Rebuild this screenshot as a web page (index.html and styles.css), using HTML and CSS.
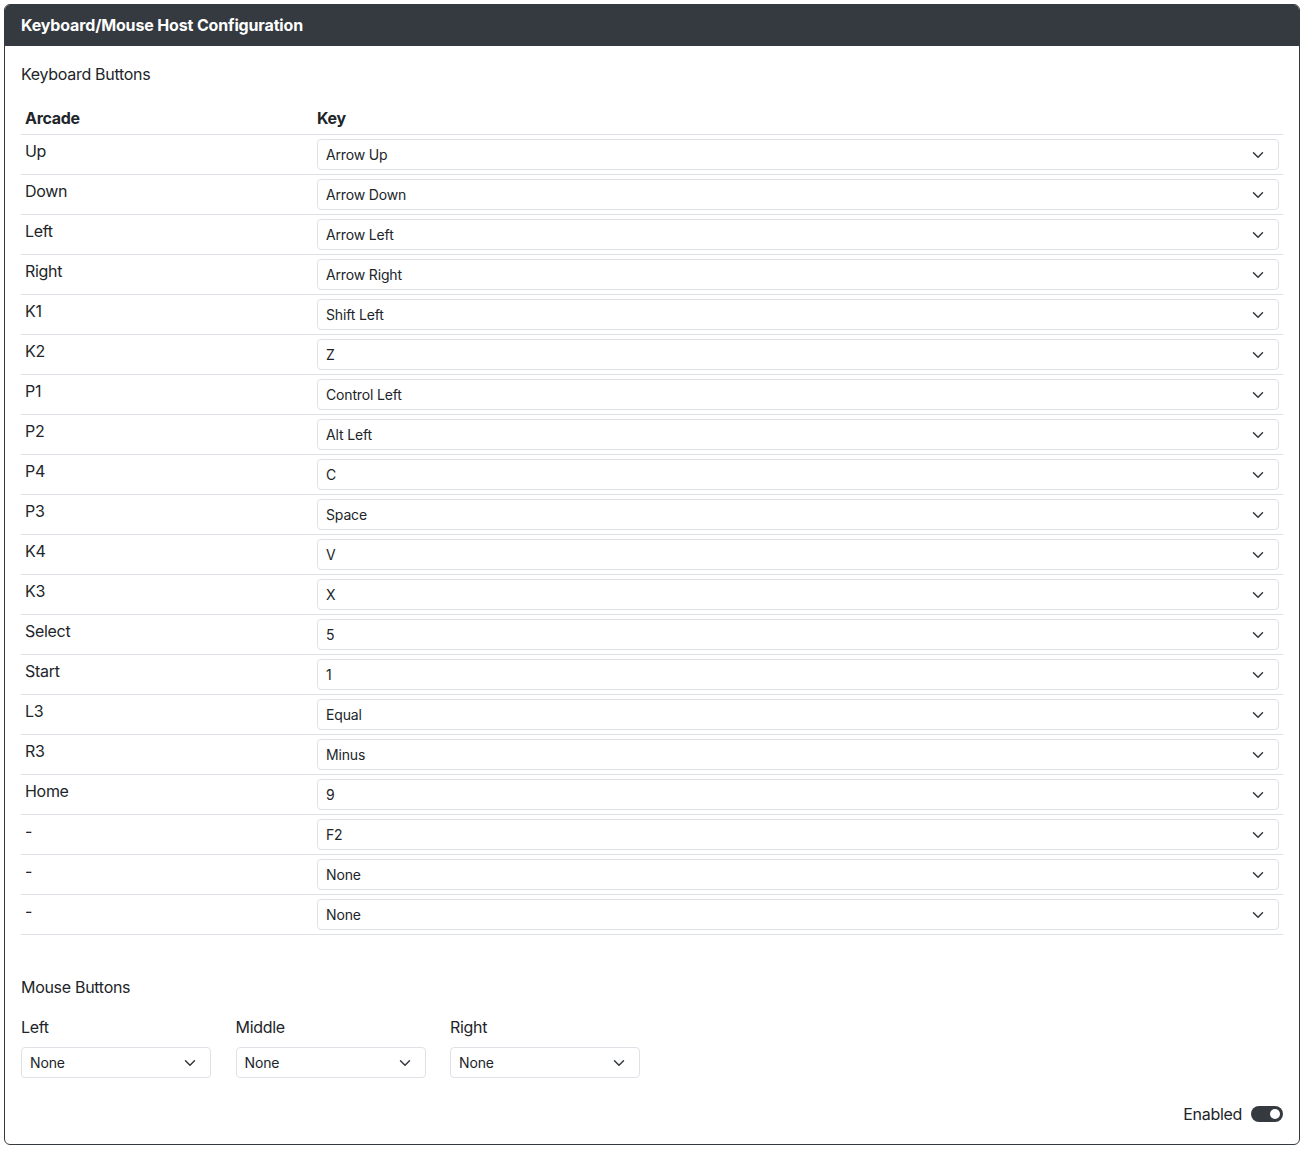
FILE: index.html
```html
<!DOCTYPE html>
<html>
<head>
<meta charset="utf-8">
<link rel="stylesheet" href="styles.css">
</head>
<body>
<div class="page">
  <div class="card">
    <div class="card-header">Keyboard/Mouse Host Configuration</div>
    <div class="card-body">
      <div class="section-label">Keyboard Buttons</div>
      <table class="keys">
        <thead>
          <tr><th class="col-arcade">Arcade</th><th>Key</th></tr>
        </thead>
        <tbody id="rows"></tbody>
      </table>

      <div class="section-label mouse-title">Mouse Buttons</div>
      <div class="mouse-row">
        <div class="mouse-col">
          <div class="field-label">Left</div>
          <div class="select"><span>None</span><svg viewBox="0 0 16 16"><path d="m2 5 6 6 6-6"/></svg></div>
        </div>
        <div class="mouse-col">
          <div class="field-label">Middle</div>
          <div class="select"><span>None</span><svg viewBox="0 0 16 16"><path d="m2 5 6 6 6-6"/></svg></div>
        </div>
        <div class="mouse-col">
          <div class="field-label">Right</div>
          <div class="select"><span>None</span><svg viewBox="0 0 16 16"><path d="m2 5 6 6 6-6"/></svg></div>
        </div>
      </div>

      <div class="enabled-row">
        <span class="enabled-label">Enabled</span>
        <span class="switch"><span class="knob"></span></span>
      </div>
    </div>
  </div>
</div>
<script>
  const data = [
    ["Up","Arrow Up"],["Down","Arrow Down"],["Left","Arrow Left"],["Right","Arrow Right"],
    ["K1","Shift Left"],["K2","Z"],["P1","Control Left"],["P2","Alt Left"],["P4","C"],
    ["P3","Space"],["K4","V"],["K3","X"],["Select","5"],["Start","1"],["L3","Equal"],
    ["R3","Minus"],["Home","9"],["-","F2"],["-","None"],["-","None"]
  ];
  const tbody = document.getElementById("rows");
  for (const [a, k] of data) {
    const tr = document.createElement("tr");
    tr.innerHTML = '<td>' + a + '</td><td><div class="select"><span>' + k +
      '</span><svg viewBox="0 0 16 16"><path d="m2 5 6 6 6-6"/></svg></div></td>';
    tbody.appendChild(tr);
  }
</script>
</body>
</html>
```

FILE: styles.css
```css
* { box-sizing: border-box; }
html, body { margin: 0; padding: 0; background: #fff; }
body {
  font-family: Inter, "Noto Sans", "Liberation Sans", sans-serif;
  font-size: 16px;
  line-height: 24px;
  letter-spacing: -0.3px;
  color: #212529;
}
.page { padding: 4px 5px 5px 4px; }
.card {
  border: 1px solid #343a40;
  border-radius: 6px;
  overflow: hidden;
}
.card-header {
  background: #343a40;
  color: #fff;
  font-weight: 700;
  letter-spacing: -0.15px;
  padding: 8px 16px 9px 16px;
}
.card-body { padding: 16px 16px 18px 16px; }
.section-label { margin-bottom: 16px; }
.keys {
  width: 100%;
  border-collapse: collapse;
  margin-bottom: 40px;
}
.keys th, .keys td {
  text-align: left;
  vertical-align: top;
  padding: 4px;
  border-bottom: 1px solid #dee2e6;
}
.keys th { font-weight: 700; }
.col-arcade { width: 292px; }
.select {
  height: 31px;
  border: 1px solid #dee2e6;
  border-radius: 4px;
  display: flex;
  align-items: center;
  justify-content: space-between;
  padding: 0 12px 0 8px;
  font-size: 14px;
  line-height: 21px;
  letter-spacing: -0.15px;
  background: #fff;
}
.select svg {
  width: 16px;
  height: 12px;
  fill: none;
  stroke: #343a40;
  stroke-width: 2;
  stroke-linecap: round;
  stroke-linejoin: round;
}
.mouse-title { margin-bottom: 16px; }
.mouse-row {
  display: flex;
  gap: 24.5px;
}
.mouse-col { width: 190px; }
.field-label { margin-bottom: 8px; }
.enabled-row {
  margin-top: 24px;
  display: flex;
  justify-content: flex-end;
  align-items: center;
  gap: 9px;
}
.switch {
  width: 32px;
  height: 16px;
  border-radius: 8px;
  background: #343a40;
  display: flex;
  align-items: center;
  justify-content: flex-end;
  padding: 0 3px;
}
.knob {
  width: 10px;
  height: 10px;
  border-radius: 50%;
  background: #fff;
}
```
